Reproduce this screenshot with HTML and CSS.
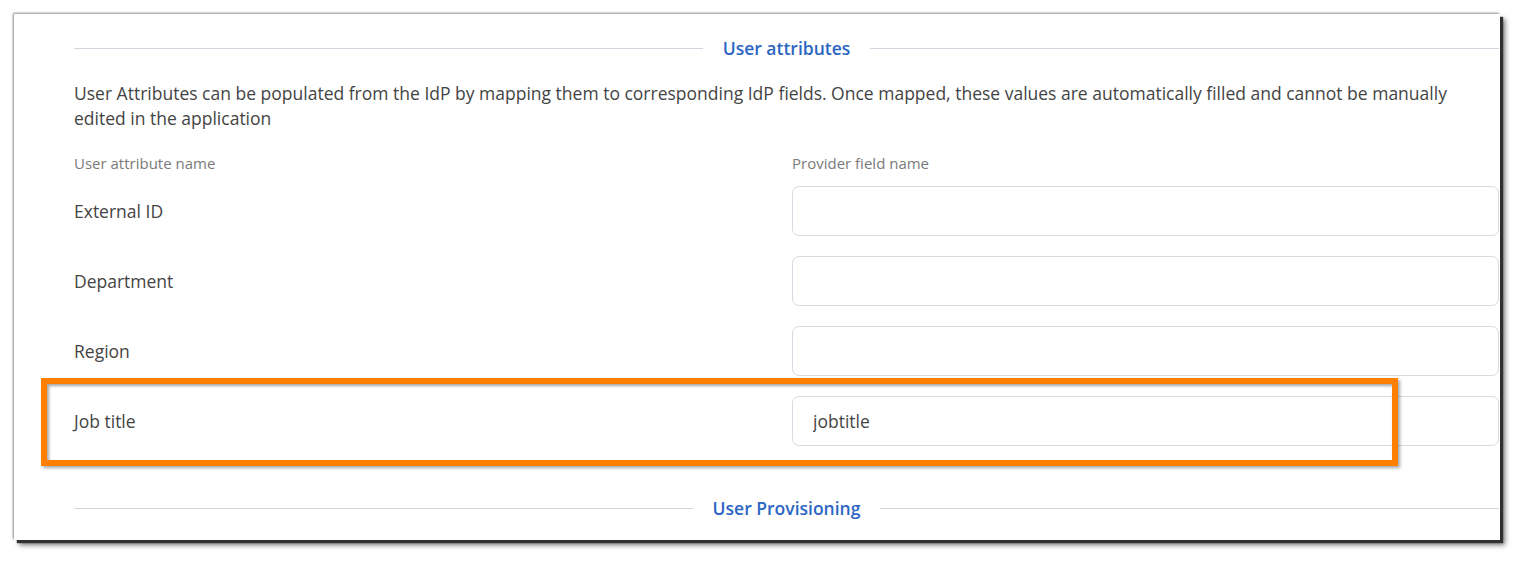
FILE: index.html
```html
<!DOCTYPE html>
<html lang="en">
<head>
  <meta charset="UTF-8">
  <meta name="viewport" content="width=device-width, initial-scale=1.0">
  <title>User attributes</title>
  <link rel="stylesheet" href="styles.css">
</head>
<body>
  <div class="frame">
    <div class="content">
      <!-- User attributes section -->
      <div class="section-title">
        <span class="line"></span>
        <h3>User attributes</h3>
        <span class="line"></span>
      </div>

      <p class="description">User Attributes can be populated from the IdP by mapping them to corresponding IdP fields. Once mapped, these values are automatically filled and cannot be manually edited in the application</p>

      <div class="mapping">
        <div class="col-head">User attribute name</div>
        <div class="col-head">Provider field name</div>

        <label for="externalId">External ID</label>
        <input type="text" id="externalId">

        <label for="department">Department</label>
        <input type="text" id="department">

        <label for="region">Region</label>
        <input type="text" id="region">

        <label for="jobTitle">Job title</label>
        <input type="text" id="jobTitle" value="jobtitle">
      </div>

      <div class="section-title provisioning">
        <span class="line"></span>
        <h3>User Provisioning</h3>
        <span class="line"></span>
      </div>
    </div>
  </div>

  <!-- Annotation highlight -->
  <div class="highlight"></div>
</body>
</html>
```

FILE: styles.css
```css
body {
  font-family: "Open Sans", Arial, sans-serif;
  margin: 0;
  padding: 14px 0 27px 14px;
  background-color: #ffffff;
}

.frame {
  width: 1486px;
  height: 526px;
  background: #ffffff;
  box-shadow: -1px -1px 2px rgba(0, 0, 0, 0.45), 3px 3px 1px #303030, 5px 5px 5px rgba(0, 0, 0, 0.55);
  overflow: hidden;
}

.content {
  padding: 22px 1px 0 60px;
}

.section-title {
  display: flex;
  align-items: center;
  gap: 20px;
}

.section-title .line {
  flex: 1;
  height: 1px;
  background-color: #cfd8e1;
}

.section-title h3 {
  margin: 0;
  font-size: 17.5px;
  font-weight: 600;
  line-height: 24px;
  color: #2c66c3;
}

.description {
  margin: 21px 0 0;
  font-size: 17.5px;
  line-height: 25px;
  color: #444444;
}

.mapping {
  display: grid;
  grid-template-columns: 718px 1fr;
  align-items: center;
  row-gap: 20px;
  margin-top: 22px;
}

.col-head {
  font-size: 15px;
  line-height: 20px;
  color: #7a7a7a;
  margin-bottom: -7px;
}

.mapping label {
  font-size: 17.5px;
  color: #444444;
}

.mapping input[type="text"] {
  box-sizing: border-box;
  height: 50px;
  width: 100%;
  padding: 0 20px;
  border: 1px solid #d6dce3;
  border-radius: 7px;
  font-family: "Open Sans", Arial, sans-serif;
  font-size: 17.5px;
  color: #444444;
  background: #ffffff;
}

.provisioning {
  margin-top: 50px;
}

/* Orange annotation box */
.highlight {
  position: absolute;
  left: 41px;
  top: 378px;
  width: 1345px;
  height: 76px;
  border: 6px solid #ff7f00;
  box-shadow: 2px 2px 3px rgba(0, 0, 0, 0.35), inset 2px 2px 3px rgba(0, 0, 0, 0.35);
}
```
